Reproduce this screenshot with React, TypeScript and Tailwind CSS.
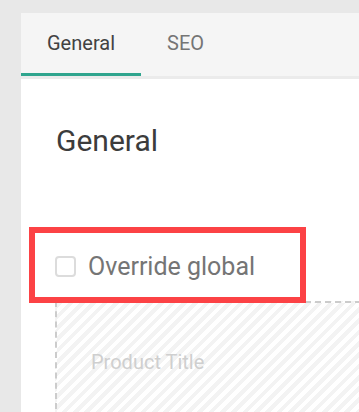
export default function App() {
  return (
    <div className="h-[412px] w-full overflow-hidden bg-[#e8e8e8] pl-[21px] pt-[13px] font-['Roboto',sans-serif]">
      <div className="h-[500px] w-[420px] bg-white">
        {/* tabs */}
        <div className="flex h-[66px] border-b-[3px] border-[#ebebeb] bg-[#f5f5f5]">
          <div className="flex h-full items-center border-b-[3px] border-[#2fa58e] px-[26px] text-[20px] text-[#424242]">
            General
          </div>
          <div className="flex h-full items-center border-b-[3px] border-transparent px-[26px] text-[20px] text-[#757575]">
            SEO
          </div>
        </div>

        <h2 className="ml-[35px] mt-[45px] text-[30px] leading-[34px] text-[#3c3c3c]">General</h2>

        <div className="relative ml-[34px] mt-[87px] flex h-[42px] items-center gap-[12px]">
          <div className="h-[21px] w-[21px] rounded-[4px] border-2 border-[#dcdcdc] bg-white" />
          <span className="text-[25px] leading-none text-[#757575]">Override global</span>
          <div className="absolute left-[-26px] top-[-18px] h-[76px] w-[277px] border-[6px] border-[#fc4245]" />
        </div>

        <div className="ml-[34px] mt-[14px] h-[200px] border-2 border-dashed border-[#cccccc] bg-[repeating-linear-gradient(135deg,#f3f3f3_0px,#f3f3f3_4px,#ffffff_4px,#ffffff_8px)] pl-[34px] pt-[44px]">
          <span className="text-[20px] text-[#cfcfcf]">Product Title</span>
        </div>
      </div>
    </div>
  );
}
